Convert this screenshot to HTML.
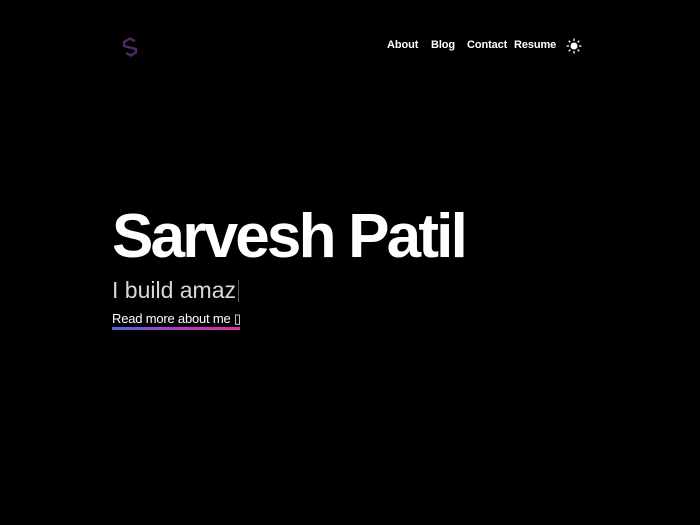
<!DOCTYPE html>
<html><head><style>
body{margin:0;width:700px;height:525px;background:#000;overflow:hidden;font-family:"Liberation Sans",sans-serif;color:#fff;position:relative}
.nav{position:absolute;top:39px;font-size:11px;font-weight:bold;letter-spacing:-0.1px}
h1{position:absolute;left:112px;top:197px;margin:0;font-size:62px;font-weight:bold;letter-spacing:-2.8px;line-height:80px}
.sub{position:absolute;left:112px;top:277px;font-size:23px;color:#d8d8d8;letter-spacing:0}
.cur{display:inline-block;width:1px;height:22px;background:#555;vertical-align:-4px;margin-left:2px}
.link{position:absolute;left:112px;top:311px;font-size:13px;letter-spacing:-0.2px;padding-bottom:3px}
.bar{position:absolute;left:112px;top:327px;width:128px;height:3px;background:linear-gradient(90deg,#4f6bdc,#b03cc8,#e0309a)}
</style></head><body>
<svg style="position:absolute;left:121px;top:37px" width="20" height="20" viewBox="0 0 20 20"><path d="M14 4 L9 1.5 L3 5 L3 9 L15 12 L15 15.5 L10 18.5 L5 16" fill="none" stroke="#4a2a6a" stroke-width="2.4" stroke-linejoin="round"/></svg>
<span class="nav" style="left:387px">About</span>
<span class="nav" style="left:431px">Blog</span>
<span class="nav" style="left:467px">Contact</span>
<span class="nav" style="left:514px">Resume</span>
<svg style="position:absolute;left:566px;top:38px" width="16" height="16" viewBox="0 0 16 16"><circle cx="8" cy="8" r="3.5" fill="#fff"/><g stroke="#fff" stroke-width="1.3"><path d="M8 0.5v2.5M8 13v2.5M0.5 8h2.5M13 8h2.5M2.7 2.7l1.7 1.7M11.6 11.6l1.7 1.7M2.7 13.3l1.7-1.7M11.6 4.4l1.7-1.7"/></g></svg>
<h1>Sarvesh Patil</h1>
<div class="sub">I build amaz<span class="cur"></span></div>
<div class="link">Read more about me ▯</div>
<div class="bar"></div>
</body></html>
